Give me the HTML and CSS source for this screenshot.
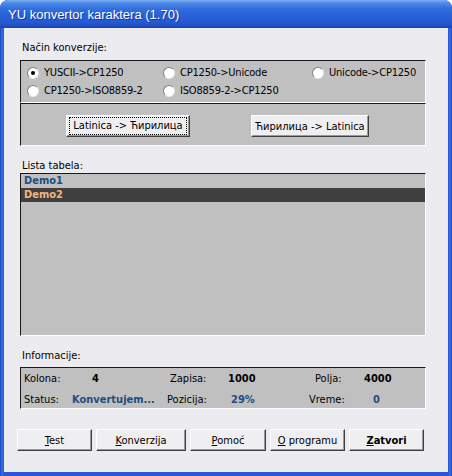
FILE: index.html
```html
<!DOCTYPE html>
<html>
<head>
<meta charset="utf-8">
<link rel="stylesheet" href="styles.css">
</head>
<body>
<div class="window">
  <div class="titlebar"><span class="title">YU konvertor karaktera (1.70)</span></div>
  <div class="client">
    <div class="label">Način konverzije:</div>
    <div class="panel radios">
      <label class="radio"><span class="dot checked"></span><span class="rt">YUSCII-&gt;CP1250</span></label>
      <label class="radio"><span class="dot"></span><span class="rt">CP1250-&gt;Unicode</span></label>
      <label class="radio"><span class="dot"></span><span class="rt">Unicode-&gt;CP1250</span></label>
      <label class="radio"><span class="dot"></span><span class="rt">CP1250-&gt;ISO8859-2</span></label>
      <label class="radio"><span class="dot"></span><span class="rt">ISO8859-2-&gt;CP1250</span></label>
    </div>
    <div class="panel convert">
      <button class="btn b-lat"><span class="focus">Latinica -&gt; Ћирилица</span></button>
      <button class="btn b-cyr"><span>Ћирилица -&gt; Latinica</span></button>
    </div>
    <div class="label lista">Lista tabela:</div>
    <div class="panel listbox">
      <div class="row">Demo1</div>
      <div class="row sel">Demo2</div>
    </div>
    <div class="label info-label">Informacije:</div>
    <div class="panel info">
      <span class="c1">Kolona:</span><span class="v c2 p-4">4</span><span class="c3 p-zap">Zapisa:</span><span class="v c4 p-1000">1000</span><span class="c5 p-pol">Polja:</span><span class="v c6">4000</span>
      <span class="c1">Status:</span><span class="v blue c2">Konvertujem...</span><span class="c3">Pozicija:</span><span class="v blue c4 p-29">29%</span><span class="c5">Vreme:</span><span class="v blue c6 p-0">0</span>
    </div>
    <div class="actions">
      <button class="btn a-test"><span><u>T</u>est</span></button>
      <button class="btn a-konv"><span><u>K</u>onverzija</span></button>
      <button class="btn a-pom"><span><u>P</u>omoć</span></button>
      <button class="btn a-o"><span><u>O</u> programu</span></button>
      <button class="btn a-zat bold"><span><u>Z</u>atvori</span></button>
    </div>
  </div>
</div>
</body>
</html>
```
FILE: styles.css
```css
html, body {
  margin: 0;
  padding: 0;
  background: #ffffff;
}
body {
  font-family: "DejaVu Sans", "Liberation Sans", sans-serif;
  font-stretch: condensed;
  font-size: 11px;
  color: #000;
}
.window {
  width: 452px;
  height: 476px;
  box-sizing: border-box;
  background: linear-gradient(90deg, #1b46c6 0px, #3a6ee0 2px, #2858d6 4px, #2858d6 448px, #3a6ee0 450px, #1b46c6 452px);
  border-radius: 8px 8px 0 0;
  overflow: hidden;
  display: flex;
  flex-direction: column;
}
.titlebar {
  height: 28px;
  flex: none;
  box-sizing: border-box;
  background: linear-gradient(180deg, #7fb0f2 0px, #4d8ae8 3px, #3471df 8px, #2a63d8 14px, #2659d2 22px, #2150c4 26px, #1a3f9e 28px);
  border-radius: 8px 8px 0 0;
  padding-left: 8px;
  display: flex;
  align-items: center;
}
.title {
  font-family: "Liberation Sans", sans-serif;
  font-stretch: normal;
  font-size: 13px;
  color: #fff;
  text-shadow: 1px 1px 0 #123a9a;
  padding-top: 1px;
}
.client {
  flex: 1;
  margin: 0 4px 4px 4px;
  background: #ecebef;
  padding: 13px 22px 0 16px;
  box-sizing: border-box;
}
.label {
  height: 13px;
  line-height: 13px;
  padding-left: 2px;
}
.panel {
  background: #c0c0c0;
  border-style: solid;
  border-width: 1px;
  border-color: #1a1a1a #ffffff #ffffff #1a1a1a;
}
.radios {
  margin-top: 6px;
  box-sizing: content-box;
  display: grid;
  grid-template-columns: 136px 149px 1fr;
  grid-auto-rows: 14px;
  row-gap: 4px;
  padding: 5px 0 0 6px;
  height: 36px;
}
.radio {
  display: flex;
  align-items: center;
  height: 14px;
  line-height: 14px;
  white-space: nowrap;
}
.rt { letter-spacing: -0.2px; }
.dot {
  width: 10px;
  height: 10px;
  border-radius: 50%;
  background: #fff;
  border: 1px solid;
  border-color: #808080 #e8e8e8 #e8e8e8 #808080;
  margin-right: 5px;
  position: relative;
  flex: none;
}
.dot.checked::after {
  content: "";
  position: absolute;
  left: 3px;
  top: 3px;
  width: 4px;
  height: 4px;
  border-radius: 50%;
  background: #000;
}
.convert {
  height: 43px;
  box-sizing: border-box;
  padding: 11px 0 0 45px;
  display: flex;
  gap: 61px;
  align-items: flex-start;
}
.btn {
  font: inherit;
  font-stretch: condensed;
  color: #000;
  height: 22px;
  box-sizing: border-box;
  background: #efeef1;
  border-style: solid;
  border-width: 1px;
  border-color: #ffffff #404040 #404040 #ffffff;
  box-shadow: inset -1px -1px 0 #9a9a9a;
  padding: 0;
  margin: 0;
  display: flex;
  align-items: center;
  justify-content: center;
  white-space: nowrap;
}
.b-lat { width: 124px; }
.b-cyr { width: 118px; }
.focus {
  outline: 1px dotted #000;
  outline-offset: 1px;
  padding: 1px 2px;
  line-height: 12px;
}
.lista { margin-top: 13px; }
.listbox {
  margin-top: 1px;
  height: 161px;
}
.row {
  height: 14px;
  line-height: 14px;
  padding-left: 3px;
  font-weight: bold;
  color: #1f4e7e;
}
.row.sel {
  background: #404040;
  color: #f3b67a;
}
.info-label { margin-top: 13px; }
.info {
  margin-top: 5px;
  height: 42px;
  box-sizing: border-box;
  padding: 4px 0 0 3px;
  display: grid;
  grid-template-columns: 48px 95px 60px 82px 55px 1fr;
  grid-auto-rows: 13px;
  row-gap: 8px;
  line-height: 13px;
  white-space: nowrap;
}
.v { font-weight: bold; }
.blue { color: #1f4e7e; }
.p-4 { padding-left: 20px; }
.p-zap { padding-left: 3px; }
.p-1000 { padding-left: 1px; }
.p-pol { padding-left: 6px; }
.p-29 { padding-left: 4px; }
.p-0 { padding-left: 9px; }
.actions {
  margin-top: 20px;
  margin-left: -3px;
  display: flex;
  gap: 4px;
}
.a-test { width: 75px; }
.a-konv { width: 90px; }
.a-pom { width: 76px; }
.a-o { width: 75px; }
.a-zat { width: 75px; }
.bold { font-weight: bold; }
```
